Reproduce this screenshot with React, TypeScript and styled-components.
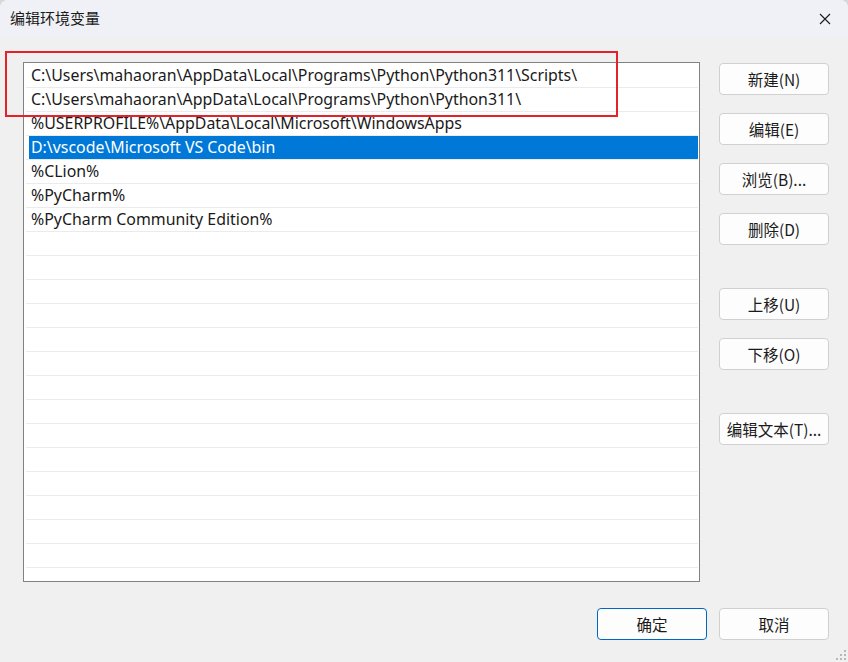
import { createGlobalStyle, styled } from "styled-components";

const paths = [
  "C:\\Users\\mahaoran\\AppData\\Local\\Programs\\Python\\Python311\\Scripts\\",
  "C:\\Users\\mahaoran\\AppData\\Local\\Programs\\Python\\Python311\\",
  "%USERPROFILE%\\AppData\\Local\\Microsoft\\WindowsApps",
  "D:\\vscode\\Microsoft VS Code\\bin",
  "%CLion%",
  "%PyCharm%",
  "%PyCharm Community Edition%",
];
const ROW_COUNT = 21;
const SELECTED = 3;

const sideButtons = [
  { label: "新建(N)", gap: 0 },
  { label: "编辑(E)", gap: 18 },
  { label: "浏览(B)...", gap: 18 },
  { label: "删除(D)", gap: 18 },
  { label: "上移(U)", gap: 43 },
  { label: "下移(O)", gap: 18 },
  { label: "编辑文本(T)...", gap: 43 },
];

const GlobalStyle = createGlobalStyle`
  html, body { margin: 0; padding: 0; background: #d8d8d8; }
  body {
    font-family: "Noto Sans", "Noto Sans CJK SC", sans-serif;
    color: #1a1a1a;
  }
`;

const App = () => {
  return (
    <>
      <GlobalStyle />
      <Window>
        <TitleBar>
          <Title>编辑环境变量</Title>
          <CloseButton>
            <svg width="12" height="12" viewBox="0 0 12 12">
              <path d="M1 1L11 11M11 1L1 11" stroke="#1a1a1a" strokeWidth="1.1" />
            </svg>
          </CloseButton>
        </TitleBar>
        <Body>
          <Main>
            <ListWrap>
              <List>
                {Array.from({ length: ROW_COUNT }).map((_, i) => (
                  <Row key={i}>
                    <RowInner $selected={i === SELECTED}>{paths[i] ?? ""}</RowInner>
                  </Row>
                ))}
              </List>
              <Highlight />
            </ListWrap>
            <Side>
              {sideButtons.map((b) => (
                <Button key={b.label} style={{ marginTop: b.gap }}>
                  {b.label}
                </Button>
              ))}
            </Side>
          </Main>
          <Footer>
            <Button $primary>确定</Button>
            <Button>取消</Button>
          </Footer>
          <Grip>
            <svg width="10" height="10" viewBox="0 0 10 10">
              {[
                [8, 0],
                [8, 4],
                [4, 4],
                [8, 8],
                [4, 8],
                [0, 8],
              ].map(([x, y]) => (
                <rect key={`${x}-${y}`} x={x} y={y} width="2" height="2" fill="#b8b8b8" />
              ))}
            </svg>
          </Grip>
        </Body>
      </Window>
    </>
  );
};

const Window = styled.div`
  width: 848px;
  height: 662px;
  background: #f0f0f0;
  border-radius: 8px 8px 0 0;
  overflow: hidden;
  display: flex;
  flex-direction: column;
  position: relative;
`;
const TitleBar = styled.div`
  height: 37px;
  background: #eff1f6;
  display: flex;
  align-items: center;
  justify-content: space-between;
  padding-left: 10px;
  flex-shrink: 0;
`;
const Title = styled.div`
  font-size: 15px;
  font-family: "Noto Sans CJK SC", sans-serif;
  margin-top: -2px;
`;
const CloseButton = styled.div`
  width: 46px;
  height: 37px;
  display: flex;
  align-items: center;
  justify-content: center;
`;
const Body = styled.div`
  flex: 1;
  display: flex;
  flex-direction: column;
  padding: 25px 19px 0 23px;
`;
const Main = styled.div`
  display: flex;
  gap: 19px;
`;
const ListWrap = styled.div`
  position: relative;
`;
const List = styled.div`
  width: 673px;
  height: 517px;
  background: #ffffff;
  border: 1px solid #828282;
  padding: 1px 1px 0 1px;
  box-sizing: content-box;
`;
const Row = styled.div`
  height: 23px;
  border-bottom: 1px solid #ebebeb;
  margin-left: 1px;
`;
const RowInner = styled.div<{ $selected?: boolean }>`
  height: 23px;
  margin-left: 3px;
  padding-left: 2px;
  line-height: 23px;
  font-size: 15.9px;
  white-space: nowrap;
  background: ${(p) => (p.$selected ? "#0078d7" : "transparent")};
  color: ${(p) => (p.$selected ? "#ffffff" : "#1a1a1a")};
`;
const Highlight = styled.div`
  position: absolute;
  left: -18px;
  top: -11px;
  width: 609px;
  height: 62px;
  border: 2px solid #e5212b;
  pointer-events: none;
`;
const Side = styled.div`
  display: flex;
  flex-direction: column;
  padding-top: 1px;
`;
const Button = styled.div<{ $primary?: boolean }>`
  width: 110px;
  height: 32px;
  box-sizing: border-box;
  background: #fdfdfd;
  border: 1px solid ${(p) => (p.$primary ? "#0067c0" : "#d0d0d0")};
  border-radius: 4px;
  display: flex;
  align-items: center;
  justify-content: center;
  font-size: 15.5px;
  font-family: "Noto Sans CJK SC", sans-serif;
  color: #1a1a1a;
`;
const Footer = styled.div`
  display: flex;
  justify-content: flex-end;
  gap: 12px;
  margin-top: 26px;
`;
const Grip = styled.div`
  position: absolute;
  right: 2px;
  bottom: 2px;
  line-height: 0;
`;

export default App;
